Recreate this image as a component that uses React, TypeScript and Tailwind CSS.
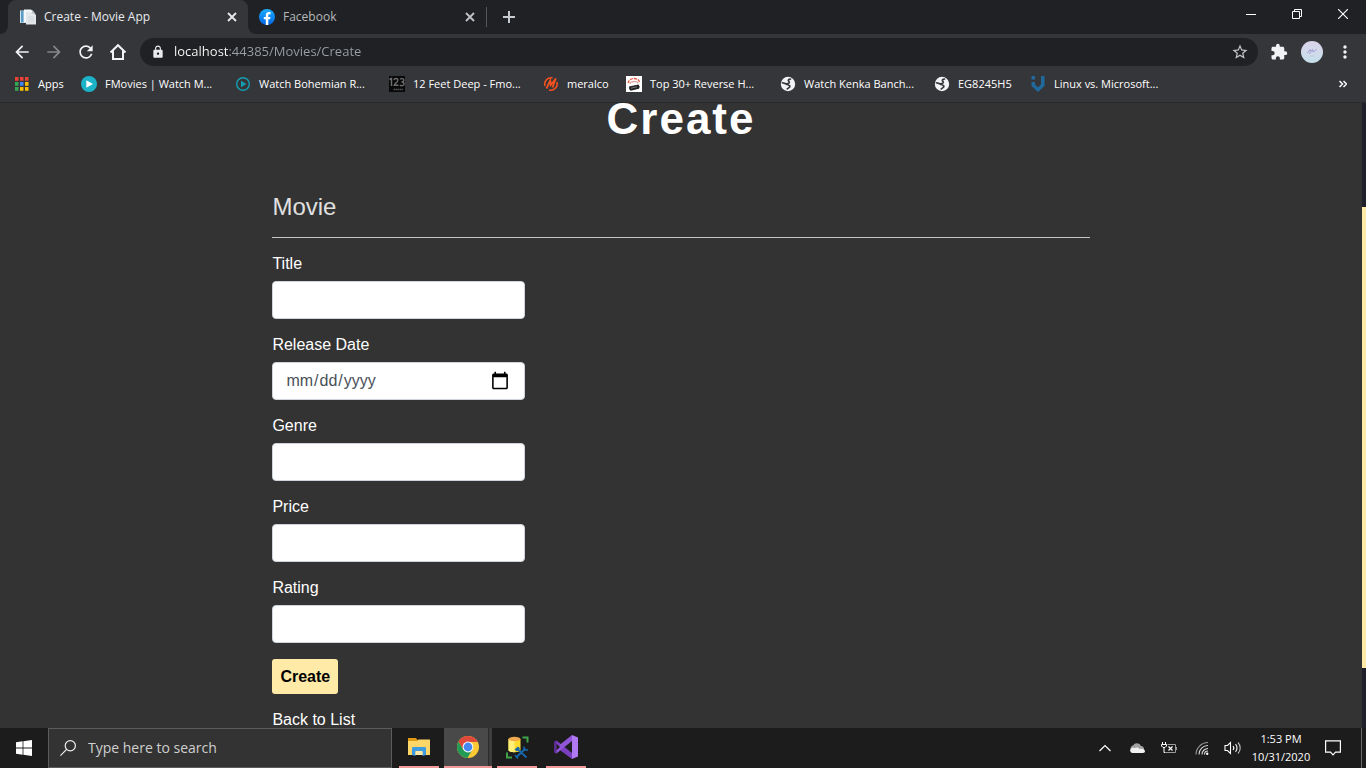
import React from "react";
import {
  MdArrowBack,
  MdArrowForward,
  MdRefresh,
  MdLock,
  MdStarBorder,
  MdExtension,
  MdMoreVert,
} from "react-icons/md";

const uiFont = "font-['Open_Sans','Noto_Sans',sans-serif]";

function PageIcon() {
  return (
    <svg viewBox="0 0 16 16" className="size-4 shrink-0" aria-hidden="true">
      <path d="M0 1.500h6V14H0z" fill="#cfe2ee" />
      <path d="M1 2h2.500v11.500H1z" fill="#5b9cc4" />
      <path d="M4 .5h7l3 3V13H4z" fill="#f4f6f8" />
      <path d="M6 3h7l3 3v9.500H6z" fill="#e3e7ea" />
      <path d="M12 .8v3.700h3.500z" fill="#b9c2c9" />
      <path d="M8 8h6M8 10h6M8 12h6" stroke="#cdd3d9" strokeWidth=".8" />
    </svg>
  );
}

function FacebookIcon() {
  return (
    <svg viewBox="0 0 16 16" className="size-4 shrink-0" aria-hidden="true">
      <defs>
        <linearGradient id="fb" x1="0" y1="0" x2="0" y2="1">
          <stop offset="0" stopColor="#19aeff" />
          <stop offset="1" stopColor="#0364e3" />
        </linearGradient>
      </defs>
      <circle cx="8" cy="8" r="8" fill="url(#fb)" />
      <path
        d="M11.100 10.300 11.500 8H9.300V6.500c0-.7.3-1.200 1.300-1.200h1V3.200C11 3.100 10.400 3 9.800 3 8 3 6.800 4.100 6.800 6.100V8h-2v2.300h2v5.600a8 8 0 0 0 2.500 0v-5.600z"
        fill="#fff"
      />
    </svg>
  );
}

function CloseIcon() {
  return (
    <svg viewBox="0 0 10 10" className="size-2.5" fill="none" stroke="currentColor" strokeWidth="1.800" aria-hidden="true">
      <path d="M1 1l8 8M9 1L1 9" />
    </svg>
  );
}

function AppsIcon() {
  const fills = ["#ea4335", "#ea4335", "#ea4335", "#34a853", "#4285f4", "#fbbc04", "#34a853", "#fbbc04", "#fbbc04"];
  return (
    <svg viewBox="0 0 14 14" className="size-3.5 shrink-0" aria-hidden="true">
      {fills.map((fill, i) => (
        <rect key={i} x={(i % 3) * 5} y={Math.floor(i / 3) * 5} width="3.500" height="3.800" fill={fill} />
      ))}
    </svg>
  );
}

function PlayIcon() {
  return (
    <svg viewBox="0 0 16 16" className="size-4 shrink-0" aria-hidden="true">
      <circle cx="8" cy="8" r="8" fill="#1cb2c8" />
      <path d="M5.300 4.200 12 8l-6.700 3.800z" fill="#fff" />
    </svg>
  );
}

function PlayRingIcon() {
  return (
    <svg viewBox="0 0 16 16" className="size-4 shrink-0" aria-hidden="true">
      <circle cx="8" cy="8" r="6.300" fill="none" stroke="#13a0b4" strokeWidth="1.400" />
      <path d="M6 4.800 11.300 8 6 11.200z" fill="#13a0b4" />
    </svg>
  );
}

function NumbersIcon() {
  return (
    <svg viewBox="0 0 16 16" className="size-4 shrink-0" aria-hidden="true">
      <rect width="16" height="16" fill="#090909" />
      <g fill="none" stroke="#6e6e6e" strokeWidth="1.400">
        <path d="M.5 3.500 2.500 2.500V10M5 4C5.500 2 9 2 8.800 4.500 8.500 6.500 5.500 7.500 5.200 9.300H9.500M11 3.200c1-1 4-.8 3.800 1-.1 1.500-1.300 1.800-2.300 1.800 1.500 0 2.500.6 2.500 1.900 0 1.900-3 2.300-4 1.100" />
      </g>
      <path d="M4.500 13.500h10" stroke="#555" strokeWidth="1.500" strokeDasharray="1.500 .5" />
    </svg>
  );
}

function MeralcoIcon() {
  return (
    <svg viewBox="0 0 16 16" className="size-4 shrink-0" fill="none" stroke="#f4511e" aria-hidden="true">
      <path d="M9.500 1.800A6.500 6.500 0 0 0 2 10" strokeWidth="1.500" />
      <path d="M14 6A6.500 6.500 0 0 1 6 14" strokeWidth="1.500" />
      <path d="M3.500 12.500 7.300 4.500 7.800 9 12.800 2.500 9.500 11.500" strokeWidth="1.800" />
    </svg>
  );
}

function CarIcon() {
  return (
    <svg viewBox="0 0 16 16" className="size-4 shrink-0" aria-hidden="true">
      <rect width="16" height="16" fill="#fff" />
      <path d="M2 7c1-3.500 3.500-4.500 6-4.500S13 3.500 14 7" fill="none" stroke="#e8553d" strokeWidth="1.300" strokeDasharray="3 1" />
      <path d="M3.500 7.500c1.500-2.500 7-2.500 9-.5" fill="none" stroke="#e3aaa2" strokeWidth="1.500" />
      <path d="M3 10.500l9.500-2 1.200 2.200-.7 2-8.500 2L3.200 13z" fill="#222" />
      <path d="M5 12.200l6-1.400" stroke="#888" strokeWidth=".8" />
    </svg>
  );
}

function GlobeIcon() {
  return (
    <svg viewBox="0 0 16 16" className="size-4 shrink-0" aria-hidden="true">
      <circle cx="8" cy="8" r="7.200" fill="#f1f3f4" />
      <path
        d="M10.500 3C8.500 3 8 4.300 8.600 5.100c.7.900 1.200 1 .4 1.900-.8.800-2.300.2-2.600 1.300M2.500 6.800c1.500.7 3.500.4 4.500 1.500.8.900 2.500.5 2.900 1.700.4 1.200-1.500 1.700-2.600 2.900"
        fill="none"
        stroke="#35363a"
        strokeWidth="1.700"
        strokeLinecap="round"
      />
    </svg>
  );
}

function ShieldVIcon() {
  return (
    <svg viewBox="0 0 16 16" className="size-4 shrink-0" fill="#20699c" aria-hidden="true">
      <path d="M1.500 0h3.500v3.500H1.500zM11 0h3.500v10L8.500 15.500H7.500L1.500 10V6H5v2.500l3 3 3-3z" />
    </svg>
  );
}

const bookmarks = [
  { label: "FMovies | Watch M...", width: "w-[154px]", icon: <PlayIcon /> },
  { label: "Watch Bohemian R...", width: "w-[154px]", icon: <PlayRingIcon /> },
  { label: "12 Feet Deep - Fmo...", width: "w-[154px]", icon: <NumbersIcon /> },
  { label: "meralco", width: "w-[83px]", icon: <MeralcoIcon /> },
  { label: "Top 30+ Reverse H...", width: "w-[154px]", icon: <CarIcon /> },
  { label: "Watch Kenka Banch...", width: "w-[154px]", icon: <GlobeIcon /> },
  { label: "EG8245H5", width: "w-[96px]", icon: <GlobeIcon /> },
  { label: "Linux vs. Microsoft...", width: "w-[154px]", icon: <ShieldVIcon /> },
];

function TabStrip() {
  return (
    <div className="flex h-[34px] items-stretch bg-[#202124] pl-2 text-xs">
      <div className="relative flex w-60 items-center gap-2 rounded-t-lg bg-[#35363a] pl-3 pr-2.5 text-[#e8eaed]">
        <svg viewBox="0 0 8 8" className="absolute -left-2 bottom-0 size-2" aria-hidden="true">
          <path d="M8 0v8H0a8 8 0 0 0 8-8z" fill="#35363a" />
        </svg>
        <svg viewBox="0 0 8 8" className="absolute -right-2 bottom-0 size-2" aria-hidden="true">
          <path d="M0 0v8h8a8 8 0 0 1-8-8z" fill="#35363a" />
        </svg>
        <PageIcon />
        <span className="grow whitespace-nowrap">Create - Movie App</span>
        <button aria-label="Close Create tab" className="p-px">
          <CloseIcon />
        </button>
      </div>
      <div className="flex w-[238px] items-center gap-2 pl-[11px] pr-2.5 text-[#9aa0a6]">
        <FacebookIcon />
        <span className="grow text-[#b4b8bc]">Facebook</span>
        <button aria-label="Close Facebook tab" className="p-px text-[#c0c3c7]">
          <CloseIcon />
        </button>
      </div>
      <div className="my-[7px] w-px bg-[#55575b]" />
      <button aria-label="New tab" className="ml-4 text-[#c8cbcf]">
        <svg viewBox="0 0 12 12" className="size-3" stroke="currentColor" strokeWidth="2" aria-hidden="true">
          <path d="M6 0v12M0 6h12" />
        </svg>
      </button>
      <div className="ml-auto flex h-7 text-white">
        <button aria-label="Minimize" className="flex w-[46px] items-center justify-center">
          <svg viewBox="0 0 10 10" className="size-2.5" aria-hidden="true">
            <path d="M0 5h10v1H0z" fill="currentColor" />
          </svg>
        </button>
        <button aria-label="Restore" className="flex w-[46px] items-center justify-center">
          <svg viewBox="0 0 10 10" className="size-2.5" fill="none" stroke="currentColor" aria-hidden="true">
            <path d="M.5 2.500h7v7h-7zM2.500 2.500v-2h7v7h-2" />
          </svg>
        </button>
        <button aria-label="Close window" className="flex w-[46px] items-center justify-center">
          <svg viewBox="0 0 10 10" className="size-2.5" fill="none" stroke="currentColor" strokeWidth="1.100" aria-hidden="true">
            <path d="M0 0l10 10M10 0L0 10" />
          </svg>
        </button>
      </div>
    </div>
  );
}

function Toolbar() {
  return (
    <div className="flex h-9 items-center bg-[#35363a] pl-3 pr-[11px] text-[#f1f3f4]">
      <div className="flex w-32 items-center gap-3">
        <button aria-label="Back">
          <MdArrowBack className="size-5" />
        </button>
        <button aria-label="Forward" className="text-[#85878a]">
          <MdArrowForward className="size-5" />
        </button>
        <button aria-label="Reload">
          <MdRefresh className="size-5" />
        </button>
        <button aria-label="Home">
          <svg viewBox="0 0 20 20" className="size-5" fill="none" stroke="currentColor" strokeWidth="2" aria-hidden="true">
            <path d="M2.500 10.500 10 3.200l7.500 7.300M5 8.800V17h10V8.800" />
          </svg>
        </button>
      </div>
      <div className="flex h-7 grow items-center rounded-full bg-[#202124] pl-[11px] pr-[9px]">
        <MdLock className="size-3.5 shrink-0 text-[#e8eaed]" />
        <input
          aria-label="Address"
          defaultValue="localhost:44385/Movies/Create"
          className="ml-[9px] grow bg-[linear-gradient(to_right,#ffffff_54px,#9aa0a6_54px)] bg-clip-text text-[13px] text-transparent outline-none"
        />
        <button aria-label="Bookmark this page" className="text-[#c4c7ca]">
          <MdStarBorder className="size-[18px]" />
        </button>
      </div>
      <button aria-label="Extensions" className="ml-3">
        <MdExtension className="size-[18px]" />
      </button>
      <button aria-label="Profile" className="ml-[13px]">
        <svg viewBox="0 0 22 22" className="size-[22px]" aria-hidden="true">
          <defs>
            <linearGradient id="avatar" x1="0" y1="0" x2="0" y2="1">
              <stop offset="0" stopColor="#dcd3ea" />
              <stop offset="1" stopColor="#c5e0ea" />
            </linearGradient>
          </defs>
          <circle cx="11" cy="11" r="11" fill="url(#avatar)" />
          <path d="M6.500 12 9 8.500l1 2 1.500-2L12 11l3.500-2.500M8 12.500l2-1" fill="none" stroke="#a49cd6" />
          <path d="M9 15h4" stroke="#b6c3dc" strokeWidth=".8" />
        </svg>
      </button>
      <button aria-label="Menu" className="ml-3">
        <MdMoreVert className="size-5" />
      </button>
    </div>
  );
}

function BookmarksBar() {
  return (
    <nav aria-label="Bookmarks" className="flex h-[33px] items-center border-b border-[#28292b] bg-[#35363a] pb-1 pl-[15px] pr-[19px] text-[11px] text-white">
      <a href="#apps" className="flex w-[66px] items-center gap-[9px]">
        <AppsIcon />
        Apps
      </a>
      {bookmarks.map((b) => (
        <a key={b.label} href="#bookmark" className={`flex items-center gap-2 whitespace-nowrap ${b.width}`}>
          {b.icon}
          {b.label}
        </a>
      ))}
      <button aria-label="More bookmarks" className="ml-auto">
        <svg viewBox="0 0 8 8" className="size-2" fill="none" stroke="currentColor" strokeWidth="1.500" aria-hidden="true">
          <path d="M.5 1l3 3-3 3M4.500 1l3 3-3 3" />
        </svg>
      </button>
    </nav>
  );
}

function Field({ id, label, type = "text" }: { id: string; label: string; type?: string }) {
  return (
    <div className="mb-4">
      <label htmlFor={id} className="mb-2 block leading-[19px]">
        {label}
      </label>
      <input
        id={id}
        type={type}
        className="block h-[38px] w-[253px] max-w-full rounded border border-[#ced4da] bg-white px-3 text-[#495057] [&::-webkit-calendar-picker-indicator]:size-5"
      />
    </div>
  );
}

function MoviePage() {
  return (
    <div className="flex min-h-0 grow bg-[#333333]">
      <main className="min-w-0 grow overflow-hidden font-['Liberation_Sans',Arial,sans-serif] text-base text-white">
        <h1 className="-mt-2.5 mb-12 text-center text-[44px] font-bold leading-[51px] tracking-[2px]">Create</h1>
        <form className="mx-auto w-3/5" onSubmit={(e) => e.preventDefault()}>
          <h4 className="text-2xl leading-[29px] text-[#e0e0e0]">Movie</h4>
          <hr className="my-4 border-t border-[#c8c8c8]" />
          <Field id="title" label="Title" />
          <Field id="release" label="Release Date" type="date" />
          <Field id="genre" label="Genre" />
          <Field id="price" label="Price" />
          <Field id="rating" label="Rating" />
          <button type="submit" className="mb-4 block rounded-[3px] bg-[#ffeba7] p-2 font-bold leading-[19px] text-black">
            Create
          </button>
          <a href="#list" className="block leading-[19px]">
            Back to List
          </a>
        </form>
      </main>
      <div className="flex w-1 shrink-0 flex-col bg-[#1f2029]">
        <div className="grow-[104]" />
        <div className="grow-[461] bg-[#ffeba7]" />
        <div className="grow-[60]" />
      </div>
    </div>
  );
}

function FolderIcon() {
  return (
    <svg viewBox="0 0 22 20" className="h-5 w-[22px]" aria-hidden="true">
      <path d="M0 1h8l1.500 2H22v3H0z" fill="#e09b12" />
      <path d="M0 4h9l1.500-1.500H22V18H0z" fill="#ffd768" />
      <path d="M4 18v-7a1 1 0 0 1 1-1h12a1 1 0 0 1 1 1v7l-3.500 1v-4h-7v4z" fill="#3f9be0" />
      <path d="M7.500 14h7v4h-7z" fill="#ffe9a8" />
    </svg>
  );
}

function ChromeIcon() {
  return (
    <svg viewBox="0 0 24 24" className="size-6" aria-hidden="true">
      <circle cx="12" cy="12" r="11" fill="#fcc934" />
      <path d="M12 1a11 11 0 0 0-9.530 5.500L7.240 14.750 12 7h9.800A11 11 0 0 0 12 1z" fill="#e0483c" />
      <path d="M2.470 6.500A11 11 0 0 0 11.500 23l4.830-8.500L12 16.500 7.240 14.750z" fill="#229a57" />
      <circle cx="12" cy="12" r="5.400" fill="#fff" />
      <circle cx="12" cy="12" r="4.400" fill="#4688f1" />
    </svg>
  );
}

function DatabaseIcon() {
  return (
    <svg viewBox="0 0 24 24" className="size-6" aria-hidden="true">
      <path d="M3.500 4v11c0 3 12 3 12 0V4z" fill="#fddc2e" />
      <path d="M3.500 4v11c0 1.500 3 2.200 6 2.200V5z" fill="#fff07a" />
      <ellipse cx="9.500" cy="4" rx="6" ry="2.200" fill="#f0a850" />
      <path d="M17.500 2.500H22.500v5M2 17.500v5h5" fill="none" stroke="#3fa34a" strokeWidth="2" />
      <path d="M11 22.500 20.500 13.500M12 13.500l9.500 9" stroke="#1668ac" strokeWidth="1.800" />
      <path d="M9.500 14.500l3.500-3 2 2-3 3z" fill="#1668ac" />
      <path d="M19 11.500v3.500h4M10 20l3 3.500" fill="none" stroke="#1668ac" strokeWidth="1.500" />
    </svg>
  );
}

function VisualStudioIcon() {
  return (
    <svg viewBox="0 0 24 24" className="size-6" aria-hidden="true">
      <path d="M0 7l2.500-1.500L18 18v6L2.500 12.500v0L0 7z" fill="#7a3fc0" />
      <path d="M0 7v10l2.500 1.500L18 6V0L3 12 3 8.500z" fill="#9156d8" />
      <path d="M0 7l2.500-1.500V18.500L0 17z" fill="#5c2d91" />
      <path d="M2.500 8.700v6.600L6 12z" fill="#1c1c1c" />
      <path d="M18 0l6 2.500v19L18 24z" fill="#b179f1" />
      <path d="M18 7v10l-6.500-5z" fill="#1c1c1c" />
    </svg>
  );
}

function Taskbar() {
  return (
    <footer className="flex h-10 shrink-0 bg-[#1c1c1c] text-white">
      <button aria-label="Start" className="flex w-12 items-center justify-center">
        <svg viewBox="0 0 16 16" className="size-4" fill="#fff" aria-hidden="true">
          <path d="M0 2.200 6.600 1.300v6.300H0zM7.400 1.200 16 0v7.600H7.400zM0 8.400h6.600v6.300L0 13.800zM7.400 8.400H16V16l-8.600-1.200z" />
        </svg>
      </button>
      <div className="flex w-[344px] items-center border border-[#5c5c5c] bg-[#333333] pl-[11px]">
        <svg viewBox="0 0 16 16" className="size-4 shrink-0" fill="none" stroke="#f0f0f0" strokeWidth="1.200" aria-hidden="true">
          <circle cx="10.300" cy="5.700" r="5.100" />
          <path d="M6.600 9.400.4 15.600" />
        </svg>
        <input
          aria-label="Search"
          placeholder="Type here to search"
          className="ml-3 min-w-0 grow bg-transparent text-sm text-white outline-none placeholder:text-[#cfcfcf]"
        />
      </div>
      <button aria-label="File Explorer" className="ml-[7px] flex w-10 items-center justify-center border-b-2 border-[#f59a9a]">
        <FolderIcon />
      </button>
      <button aria-label="Google Chrome" className="ml-[5px] flex w-12 border-b-2 border-[#f59a9a] bg-[#3d3d3d]">
        <span className="flex h-full w-[45px] items-center justify-center border-r border-[#2b2b2b] bg-[#494949] pl-1">
          <ChromeIcon />
        </span>
      </button>
      <button aria-label="SQL Server" className="ml-[5px] flex w-10 items-center justify-center border-b-2 border-[#f59a9a]">
        <DatabaseIcon />
      </button>
      <button aria-label="Visual Studio" className="ml-[9px] flex w-10 items-center justify-center border-b-2 border-[#f59a9a]">
        <VisualStudioIcon />
      </button>

      <div className="ml-auto flex items-center">
        <button aria-label="Show hidden icons">
          <svg viewBox="0 0 12 8" className="h-2 w-3" fill="none" stroke="#fff" strokeWidth="1.200" aria-hidden="true">
            <path d="M.5 7 6 1.500 11.500 7" />
          </svg>
        </button>
        <button aria-label="OneDrive" className="ml-[18px]">
          <svg viewBox="0 0 16 12" className="h-3 w-4" aria-hidden="true">
            <path d="M2 8a3 3 0 0 1 2-4.500A4.500 4.500 0 0 1 12 4a3.500 3.500 0 0 1 3 4z" fill="#a3a3a3" />
            <path d="M3 11a2.600 2.600 0 0 1 0-5c1-.2 1.700-.2 2.500.2 2-1.200 4-.7 5 .8 2.500-.8 5.500 0 5.500 2.300 0 1-.8 1.700-2 1.700z" fill="#f2f2f2" />
          </svg>
        </button>
        <button aria-label="Battery" className="ml-4">
          <svg viewBox="0 0 16 12" className="h-3 w-4" fill="none" stroke="#fff" aria-hidden="true">
            <path d="M1.500 0v2M4.500 0v2M.5 2.500h5V4L4 5.500H2L.5 4zM3 5.500v5h1.500" />
            <path d="M6.500 2.500h8v8H5M15.500 5v3" stroke="#9c9c9c" />
            <path d="M7.500 4.500l4 4M11.500 4.500l-4 4" strokeWidth="1.200" />
          </svg>
        </button>
        <button aria-label="Network" className="ml-[18px]">
          <svg viewBox="0 0 14 14" className="size-3.5" fill="none" stroke="#d8d8d8" strokeWidth="1.100" aria-hidden="true">
            <path d="M1 13.500A12 12 0 0 1 13 1.500" stroke="#9a9a9a" />
            <path d="M4 13.500a9 9 0 0 1 9-9M7 13.500a6 6 0 0 1 6-6M9.500 13.500a3.500 3.500 0 0 1 3.500-3.500" />
            <circle cx="12.200" cy="12.700" r="1.200" fill="#fff" stroke="none" />
          </svg>
        </button>
        <button aria-label="Volume" className="ml-[15px]">
          <svg viewBox="0 0 18 14" className="h-3.5 w-[18px]" fill="none" stroke="#fff" strokeWidth="1.100" aria-hidden="true">
            <path d="M1 4.500h2.500l3-3v11l-3-3H1z" />
            <path d="M9 5a3 3 0 0 1 0 4M11.500 3.200a5.500 5.500 0 0 1 0 7.600" />
            <path d="M14 1.500a8 8 0 0 1 0 11" stroke="#bbb" />
          </svg>
        </button>
        <div className="ml-[7px] w-[64px] text-center text-[11px] leading-[18px] whitespace-nowrap">
          <div>1:53 PM</div>
          <div>10/31/2020</div>
        </div>
        <button aria-label="Notifications" className="ml-3 mr-5">
          <svg viewBox="0 0 16 16" className="size-4" fill="none" stroke="#fff" strokeWidth="1.200" aria-hidden="true">
            <path d="M.6 .8h14.800v11.400H10.500L8 14.800l-2.500-2.600H.6z" />
          </svg>
        </button>
        <div className="h-full w-[5px] border-l border-[#6a6a6a]" />
      </div>
    </footer>
  );
}

export default function App() {
  return (
    <div className={`flex h-screen flex-col overflow-hidden bg-[#333333] ${uiFont}`}>
      <header className="shrink-0">
        <TabStrip />
        <Toolbar />
        <BookmarksBar />
      </header>
      <MoviePage />
      <Taskbar />
    </div>
  );
}
